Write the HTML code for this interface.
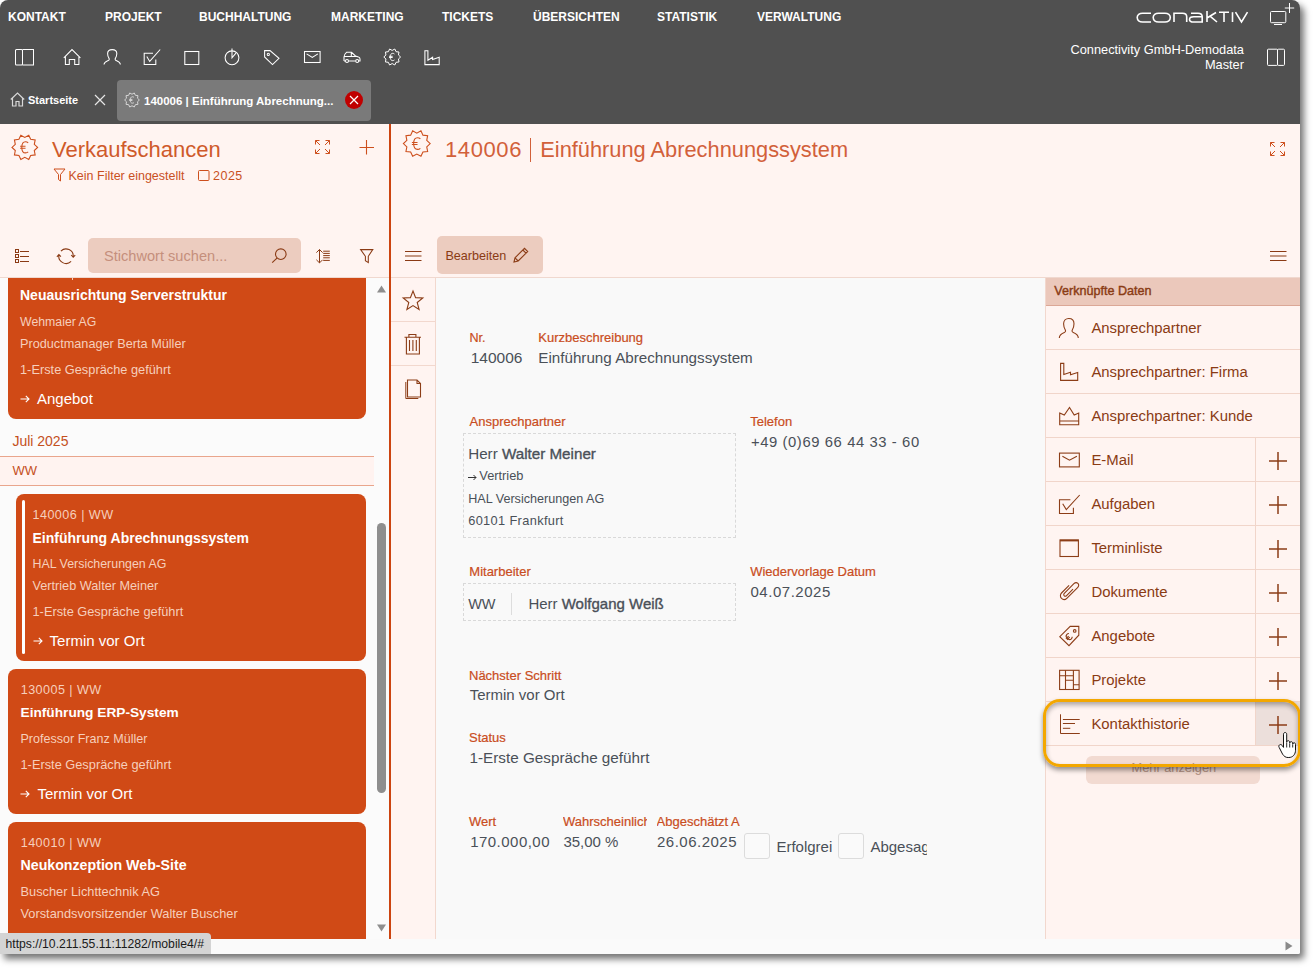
<!DOCTYPE html>
<html><head><meta charset="utf-8">
<style>
*{margin:0;padding:0;box-sizing:border-box}
html,body{width:1315px;height:969px;overflow:hidden;background:#fff;font-family:"Liberation Sans",sans-serif}
.win{position:absolute;left:0;top:0;width:1300px;height:954px;border-radius:8px 8px 2px 0;overflow:hidden;background:#f9f9f9;box-shadow:4px 5px 7px rgba(0,0,0,.55)}
.a{position:absolute}
.t{position:absolute;white-space:nowrap;line-height:1}
svg{position:absolute;overflow:visible}
.top{left:0;top:0;width:1300px;height:124px;background:#505050}
.nav{color:#fff;font-size:12px;font-weight:700;top:11px}
.wi{fill:none;stroke:#fff;stroke-width:1.3}
.lp{left:0;top:124px;width:389px;height:153px;background:#fff4f1}
.oi{fill:none;stroke:#cd4f1d;stroke-width:1.3}
.bi{fill:none;stroke:#8c3d17;stroke-width:1.3}
.card{position:absolute;background:#d04a16;border-radius:8px}
.cw{color:#fff;font-weight:700;font-size:14px}
.cl{color:#f7d0bd;font-size:12.6px}
.lbl{color:#c94d22;font-size:13px;-webkit-text-stroke:.25px #c94d22}
.val{color:#4b5057;font-size:15px}
.rrow{position:absolute;left:1046px;width:254px;height:44px;border-bottom:1px solid #f1d5ca}
.rtxt{color:#8a3b14;font-size:14.9px}
</style></head><body>
<div class="win">
  <!-- top bar -->
  <div class="a top"></div>
  <div class="t nav" style="left:8px">KONTAKT</div>
  <div class="t nav" style="left:105px">PROJEKT</div>
  <div class="t nav" style="left:199px">BUCHHALTUNG</div>
  <div class="t nav" style="left:331px">MARKETING</div>
  <div class="t nav" style="left:442px">TICKETS</div>
  <div class="t nav" style="left:533px">ÜBERSICHTEN</div>
  <div class="t nav" style="left:657px">STATISTIK</div>
  <div class="t nav" style="left:757px">VERWALTUNG</div>


  <!-- top icons -->
  <svg class="a" style="left:10px;top:44px" width="40" height="26" viewBox="10 44 40 26" fill="none" stroke="#fff" stroke-width="1.05"><rect x="15.5" y="49.5" width="7" height="15.5" rx="1"/><path d="M22.5 49.5H33.5V65H22.5"/></svg>
  <svg class="a" style="left:60px;top:44px" width="40" height="26" viewBox="60 44 40 26" fill="none" stroke="#fff" stroke-width="1.05"><path d="M63.8 57.8L72 49.6 80.4 57.8M65.4 56.2V64.5H69.3V59.5H74.7V64.5H78.9V56.2"/></svg>
  <svg class="a" style="left:100px;top:44px" width="40" height="26" viewBox="100 44 40 26" fill="none" stroke="#fff" stroke-width="1.05"><path d="M104 64.6C104 62 106.3 61.3 108.3 60.4 109.3 60 109.5 59.2 109 58.4 108 57 107.6 55.5 107.6 53.6 107.6 50.9 109.5 49.6 112.2 49.6S116.8 50.9 116.8 53.6C116.8 55.5 116.4 57 115.4 58.4 114.9 59.2 115.1 60 116.1 60.4 118.1 61.3 120.4 62 120.4 64.6"/></svg>
  <svg class="a" style="left:140px;top:44px" width="40" height="26" viewBox="140 44 40 26" fill="none" stroke="#fff" stroke-width="1.05"><path d="M153 53.3H144.2V64.5H155.8V59.5"/><path d="M146.8 56.6L149.7 61.4 160.2 49.5"/></svg>
  <svg class="a" style="left:180px;top:44px" width="40" height="26" viewBox="180 44 40 26" fill="none" stroke="#fff" stroke-width="1.05"><rect x="184.8" y="51.5" width="14" height="13"/></svg>
  <svg class="a" style="left:220px;top:44px" width="40" height="26" viewBox="220 44 40 26" fill="none" stroke="#fff" stroke-width="1.05"><circle cx="232" cy="57.8" r="6.9"/><path d="M232 48.6V57.8L235.9 53.2"/></svg>
  <svg class="a" style="left:260px;top:44px" width="40" height="26" viewBox="260 44 40 26" fill="none" stroke="#fff" stroke-width="1.05"><path d="M264.6 50.6H270L279 58.3 272.5 64.6 264.6 57Z"/><circle cx="268.3" cy="54.4" r="1.1"/></svg>
  <svg class="a" style="left:300px;top:44px" width="40" height="26" viewBox="300 44 40 26" fill="none" stroke="#fff" stroke-width="1.05"><rect x="304.5" y="51.5" width="15.6" height="11"/><path d="M306.6 53.9L312.3 57.4 317.9 53.9"/></svg>
  <svg class="a" style="left:340px;top:44px" width="40" height="26" viewBox="340 44 40 26" fill="none" stroke="#fff" stroke-width="1.05"><path d="M344 61V57C344 55.4 345 53.5 346.5 52.3H351.5L355.5 56 358.5 57C359.5 57.3 360 58 360 59V61H358.6M355.6 61H348.4M345.4 61H344M344.2 56.4H357M351.3 52.3V56.4"/><circle cx="347" cy="61" r="1.5"/><circle cx="357.2" cy="61" r="1.5"/></svg>
  <svg class="a" style="left:380px;top:45px" width="22" height="22" viewBox="380 45 22 22" fill="none" stroke="#fff" stroke-width="1"><path d="M400.60 57.00 L398.43 54.98 L399.00 52.06 L396.05 51.70 L394.80 49.01 L392.20 50.45 L389.60 49.01 L388.35 51.70 L385.40 52.06 L385.97 54.98 L383.80 57.00 L385.97 59.02 L385.40 61.94 L388.35 62.30 L389.60 64.99 L392.20 63.55 L394.80 64.99 L396.05 62.30 L399.00 61.94 L398.43 59.02Z"/><path d="M394.43 53.98C393.91 53.52 393.38 53.33 392.66 53.33C391.08 53.33 390.23 54.83 390.23 57.00C390.23 59.17 391.08 60.61 392.66 60.61C393.38 60.61 393.91 60.41 394.43 59.95M389.12 56.28H392.66M389.12 57.52H392.66"/></svg>
  <svg class="a" style="left:420px;top:44px" width="40" height="26" viewBox="420 44 40 26" fill="none" stroke="#fff" stroke-width="1.05"><path d="M424.9 50.8H427.9V60.3L432.6 57.3V59.6L439.2 57.3V64.6H424.9Z"/></svg>

  <!-- tabs -->
  <svg class="a" style="left:10px;top:92px" width="15" height="15" viewBox="0 0 15 15" fill="none" stroke="#d8d8d8" stroke-width="1.2"><path d="M0.8 7.5L7.5 1l6.7 6.5M2.5 6v8h3.5V9.5h3V14h3.5V6"/></svg>
  <div class="t" style="left:28px;top:95px;font-size:11px;font-weight:700;color:#fff">Startseite</div>
  <svg class="a" style="left:94px;top:94px" width="12" height="12" viewBox="0 0 12 12" stroke="#e6e6e6" stroke-width="1.2"><path d="M1 1l10 10M11 1L1 11"/></svg>
  <div class="a" style="left:117px;top:80px;width:254px;height:41px;background:#7a7a7a;border-radius:4px"></div>
  <svg class="a" style="left:121px;top:89px" width="20" height="20" viewBox="121 89 20 20" fill="none" stroke="#d5d5d5" stroke-width="1"><path d="M139.40 100.00 L137.49 98.22 L137.99 95.65 L135.39 95.33 L134.29 92.96 L132.00 94.23 L129.71 92.96 L128.61 95.33 L126.01 95.65 L126.51 98.22 L124.60 100.00 L126.51 101.78 L126.01 104.35 L128.61 104.67 L129.71 107.04 L132.00 105.77 L134.29 107.04 L135.39 104.67 L137.99 104.35 L137.49 101.78Z"/><path d="M133.97 97.34C133.50 96.94 133.04 96.76 132.40 96.76C131.02 96.76 130.27 98.09 130.27 100.00C130.27 101.91 131.02 103.18 132.40 103.18C133.04 103.18 133.50 103.01 133.97 102.60M129.28 99.36H132.40M129.28 100.46H132.40"/></svg>
  <div class="t" style="left:144px;top:95.5px;font-size:11.5px;font-weight:700;color:#fff">140006 | Einführung Abrechnung...</div>
  <svg class="a" style="left:345px;top:91px" width="18" height="18" viewBox="0 0 18 18"><circle cx="9" cy="9" r="9" fill="#c00000"/><path d="M5 5l8 8M13 5l-8 8" stroke="#fff" stroke-width="1.2"/></svg>

  <!-- top right -->
  <svg class="a" style="left:1136px;top:11px" width="113" height="13" viewBox="0 0 113 13" fill="none" stroke="#fff" stroke-width="1.6"><path d="M15 2.2H6.5C3.5 2.2 1.2 4 1.2 6.6s2.3 4.4 5.3 4.4H15"/><path d="M22.5 2.2h6.5c3 0 5.3 1.8 5.3 4.4S32 11 29 11h-6.5c-3 0-5.3-1.8-5.3-4.4s2.3-4.4 5.3-4.4z"/><path d="M38 11V2.2h8.5c2.5 0 4.2 1.5 4.2 3.6V11"/><path d="M55 2.2h7c2.5 0 4.2 1.5 4.2 3.6V11h-8.5c-2.4 0-4.2-.9-4.2-2.6s1.8-2.6 4.2-2.6h8.5"/><path d="M71 0v11M71 7l9-5.5M74 5.2L81 11"/><path d="M83 1.2h10M88 1.2V11"/><path d="M96.5 1.2V11"/><path d="M99.5 1.2L105.5 11l6-9.8"/></svg>
  <svg class="a" style="left:1260px;top:0px" width="40" height="30" viewBox="1260 0 40 30" fill="none" stroke="#fff" stroke-width="1"><rect x="1270.5" y="11.5" width="15.3" height="11.2" rx="1"/><path d="M1274 24.5H1282M1289.5 3V13M1284.8 8H1294.2"/></svg>
  <div class="t" style="right:56px;top:43.3px;font-size:12.8px;color:#fff;text-align:right;line-height:14.4px">Connectivity GmbH-Demodata<br>Master</div>
  <svg class="a" style="left:1260px;top:40px" width="40" height="30" viewBox="1260 40 40 30" fill="none" stroke="#fff" stroke-width="1"><rect x="1267.5" y="49.2" width="10" height="16.2" rx="0.8"/><rect x="1277.5" y="49.2" width="7" height="16.2" rx="1"/></svg>

  <!-- left panel -->
  <div class="a lp"></div>

  <!-- left header content -->
  <svg class="a" style="left:9px;top:131px" width="31" height="31" viewBox="9 131 31 31" fill="none" stroke="#cd4f1d" stroke-width="1.1"><path d="M37.60 147.40 L34.30 144.31 L35.16 139.88 L30.67 139.32 L28.76 135.23 L24.80 137.42 L20.84 135.23 L18.93 139.32 L14.44 139.88 L15.30 144.31 L12.00 147.40 L15.30 150.49 L14.44 154.92 L18.93 155.48 L20.84 159.57 L24.80 157.38 L28.76 159.57 L30.67 155.48 L35.16 154.92 L34.30 150.49Z"/><path d="M28.20 142.80C27.40 142.10 26.60 141.80 25.50 141.80C23.10 141.80 21.80 144.10 21.80 147.40C21.80 150.70 23.10 152.90 25.50 152.90C26.60 152.90 27.40 152.60 28.20 151.90M20.10 146.30H25.50M20.10 148.20H25.50"/></svg>
  <div class="t" style="left:52px;top:139.3px;font-size:22px;color:#cf5a2a">Verkaufschancen</div>
  <svg class="a" style="left:315px;top:140px" width="16" height="15" viewBox="0 0 16 15" fill="none" stroke="#cd4f1d" stroke-width="1"><path d="M0.5 4.5V0.5H4.5M0.5 0.5L5 5M10.5 0.5H14.5V4.5M14.5 0.5L10 5M0.5 9.5V13.5H4.5M0.5 13.5L5 9M14.5 9.5V13.5H10.5M14.5 13.5L10 9"/></svg>
  <svg class="a" style="left:359px;top:140px" width="15" height="15" viewBox="0 0 15 15" fill="none" stroke="#cd4f1d" stroke-width="1.1"><path d="M7.5 0v14.5M0.5 7.5h14.5"/></svg>
  <svg class="a" style="left:53px;top:168px" width="13" height="14" viewBox="0 0 13 14" fill="none" stroke="#cd4f1d" stroke-width="1"><path d="M1 1h11L7.5 6.5V13L5.5 11.5V6.5z"/></svg>
  <div class="t" style="left:68.5px;top:170px;font-size:12.5px;color:#c9501f">Kein Filter eingestellt</div>
  <svg class="a" style="left:198px;top:170px" width="12" height="11" viewBox="0 0 12 11" fill="none" stroke="#cd4f1d" stroke-width="1"><rect x="0.5" y="0.5" width="10.5" height="10" rx="1"/></svg>
  <div class="t" style="left:213px;top:170px;font-size:12.5px;color:#c9501f;letter-spacing:0.5px">2025</div>

  <!-- left toolbar -->
  <svg class="a" style="left:10px;top:244px" width="24" height="24" viewBox="10 244 24 24" fill="none" stroke="#8a3a14" stroke-width="1"><rect x="15.5" y="249.5" width="3" height="3"/><rect x="15.5" y="254.5" width="3" height="3"/><rect x="15.5" y="259.5" width="3" height="3"/><path d="M20 251.5H29M20 256.5H29M20 261.5H29"/></svg>
  <svg class="a" style="left:54px;top:244px" width="24" height="24" viewBox="54 244 24 24" fill="none" stroke="#8a3a14" stroke-width="1.1"><path d="M60.9 251.1A7.2 7.2 0 0 1 73.2 256.8M71.1 261.3A7.2 7.2 0 0 1 58.9 255M71.2 255L73.2 257.3 75.2 255.2M56.9 256.8L58.9 254.5 60.9 256.6"/></svg>
  <div class="a" style="left:88px;top:238px;width:213px;height:35px;background:#ecccbf;border-radius:5px"></div>
  <div class="t" style="left:104px;top:249px;font-size:14.6px;color:#c58f7c">Stichwort suchen...</div>
  <svg class="a" style="left:268px;top:244px" width="24" height="24" viewBox="268 244 24 24" fill="none" stroke="#8a3a14" stroke-width="1.1"><circle cx="280.8" cy="254.2" r="5.3"/><path d="M277 258.1L272.2 262.7"/></svg>
  <svg class="a" style="left:312px;top:244px" width="24" height="24" viewBox="312 244 24 24" fill="none" stroke="#8a3a14" stroke-width="1"><path d="M319.5 249.6V262.8M316.4 252.6L319.5 249.5 322.6 252.6M316.4 259.8L319.5 262.9 322.6 259.8M323.2 251.2H329.8M323.2 253.4H329.8M323.2 255.6H329.8M323.2 257.8H329.8M323.2 260.4H329.8"/></svg>
  <svg class="a" style="left:356px;top:244px" width="24" height="24" viewBox="356 244 24 24" fill="none" stroke="#8a3a14" stroke-width="1.05"><path d="M360.6 249.6H372.8L368.3 256.3V262.6L365.4 260.8V256.3Z"/></svg>

  <!-- middle header -->
  <div class="a" style="left:391px;top:124px;width:909px;height:153px;background:#fff4f1"></div>
  <div class="a" style="left:0;top:277px;width:1300px;height:1px;background:#f0d8cf"></div>
  <div class="a" style="left:389px;top:124px;width:2px;height:815px;background:#cc4410"></div>

  <!-- list area -->
  <div class="a" style="left:0;top:278px;width:389px;height:661px;background:#fbfbfb"></div>


  <!-- list -->
  <div class="card" style="left:8px;top:278px;width:358px;height:141px;border-radius:0 0 8px 8px"></div>
  <div class="t" style="left:20px;top:287.8px;font-size:14px;color:#fff;font-weight:700">Neuausrichtung Serverstruktur</div>
  <div class="t" style="left:20px;top:315.6px;font-size:12.3px;color:#f6cfbc">Wehmaier AG</div>
  <div class="t" style="left:20px;top:338.2px;font-size:12.7px;color:#f6cfbc">Productmanager Berta Müller</div>
  <div class="t" style="left:20px;top:364.2px;font-size:12.8px;color:#f6cfbc">1-Erste Gespräche geführt</div>
  <svg class="a" style="left:20px;top:395px" width="10" height="8" viewBox="0 0 10 8" fill="none" stroke="#fff" stroke-width="1.1"><path d="M0.5 4h8.5M5.8 0.8L9 4 5.8 7.2"/></svg>
  <div class="t" style="left:37px;top:391.2px;font-size:15px;color:#fff">Angebot</div>
  <div class="t" style="left:12.4px;top:433.9px;font-size:14px;color:#c4501d">Juli 2025</div>
  <div class="a" style="left:0;top:456px;width:374px;height:30px;background:#fff3f0;border-top:1px solid #e9a58c;border-bottom:1px solid #e9a58c"></div>
  <div class="t" style="left:12.4px;top:463.9px;font-size:13px;color:#c4501d">WW</div>
  <div class="card" style="left:16px;top:494px;width:350px;height:167px"></div>
  <div class="a" style="left:22px;top:500px;width:3px;height:154px;background:#fff;border-radius:1.5px"></div>
  <div class="t" style="left:32.5px;top:508.6px;font-size:12.6px;color:#f6cfbc;letter-spacing:0.45px">140006 | WW</div>
  <div class="t" style="left:32.5px;top:530.5px;font-size:14px;color:#fff;font-weight:700">Einführung Abrechnungssystem</div>
  <div class="t" style="left:32.5px;top:557.8px;font-size:12.4px;color:#f6cfbc">HAL Versicherungen AG</div>
  <div class="t" style="left:32.5px;top:580.4px;font-size:12.7px;color:#f6cfbc">Vertrieb Walter Meiner</div>
  <div class="t" style="left:32.5px;top:606.2px;font-size:12.8px;color:#f6cfbc">1-Erste Gespräche geführt</div>
  <svg class="a" style="left:32.5px;top:637px" width="10" height="8" viewBox="0 0 10 8" fill="none" stroke="#fff" stroke-width="1.1"><path d="M0.5 4h8.5M5.8 0.8L9 4 5.8 7.2"/></svg>
  <div class="t" style="left:49.6px;top:633.1px;font-size:15px;color:#fff">Termin vor Ort</div>
  <div class="card" style="left:8px;top:669px;width:358px;height:145px"></div>
  <div class="t" style="left:20.7px;top:683.6px;font-size:12.6px;color:#f6cfbc;letter-spacing:0.45px">130005 | WW</div>
  <div class="t" style="left:20.5px;top:706.0px;font-size:13.7px;color:#fff;font-weight:700">Einführung ERP-System</div>
  <div class="t" style="left:20.5px;top:733.2px;font-size:12.56px;color:#f6cfbc">Professor Franz Müller</div>
  <div class="t" style="left:20.5px;top:759.4px;font-size:12.8px;color:#f6cfbc">1-Erste Gespräche geführt</div>
  <svg class="a" style="left:20px;top:790px" width="10" height="8" viewBox="0 0 10 8" fill="none" stroke="#fff" stroke-width="1.1"><path d="M0.5 4h8.5M5.8 0.8L9 4 5.8 7.2"/></svg>
  <div class="t" style="left:37.4px;top:786.1px;font-size:15px;color:#fff">Termin vor Ort</div>
  <div class="card" style="left:8px;top:822px;width:358px;height:140px"></div>
  <div class="t" style="left:20.7px;top:836.6px;font-size:12.6px;color:#f6cfbc;letter-spacing:0.45px">140010 | WW</div>
  <div class="t" style="left:20.5px;top:858.0px;font-size:14.2px;color:#fff;font-weight:700">Neukonzeption Web-Site</div>
  <div class="t" style="left:20.5px;top:886.2px;font-size:12.8px;color:#f6cfbc">Buscher Lichttechnik AG</div>
  <div class="t" style="left:20.5px;top:908.0px;font-size:12.8px;color:#f6cfbc">Vorstandsvorsitzender Walter Buscher</div>
  <div class="a" style="left:377px;top:523px;width:9px;height:270px;background:#8e8e8e;border-radius:4.5px"></div>
  <svg class="a" style="left:377px;top:285px" width="9" height="8" viewBox="0 0 9 8"><path d="M0 7.5L4.5 0.5 9 7.5z" fill="#8e8e8e"/></svg>
  <svg class="a" style="left:377px;top:924px" width="9" height="8" viewBox="0 0 9 8"><path d="M0 0.5L4.5 7.5 9 0.5z" fill="#8e8e8e"/></svg>


  <!-- middle header content -->
  <svg class="a" style="left:400px;top:127px" width="32" height="32" viewBox="400 127 32 32" fill="none" stroke="#cd4f1d" stroke-width="1.1"><path d="M430.20 143.60 L426.74 140.37 L427.64 135.72 L422.94 135.14 L420.94 130.86 L416.80 133.15 L412.66 130.86 L410.66 135.14 L405.96 135.72 L406.86 140.37 L403.40 143.60 L406.86 146.83 L405.96 151.48 L410.66 152.06 L412.66 156.34 L416.80 154.05 L420.94 156.34 L422.94 152.06 L427.64 151.48 L426.74 146.83Z"/><path d="M420.36 138.78C419.52 138.05 418.68 137.74 417.53 137.74C415.02 137.74 413.66 140.15 413.66 143.60C413.66 147.05 415.02 149.36 417.53 149.36C418.68 149.36 419.52 149.04 420.36 148.31M411.88 142.45H417.53M411.88 144.44H417.53"/></svg>
  <div class="t" style="left:445px;top:139.2px;font-size:22px;color:#d2603a;letter-spacing:0.6px">140006</div>
  <div class="a" style="left:530px;top:138px;width:1.2px;height:23.5px;background:#d2603a"></div>
  <div class="t" style="left:540.3px;top:139.3px;font-size:21.8px;color:#d2603a">Einführung Abrechnungssystem</div>
  <svg class="a" style="left:1270px;top:141.5px" width="16" height="15" viewBox="0 0 16 15" fill="none" stroke="#cd4f1d" stroke-width="1"><path d="M0.5 4.5V0.5H4.5M0.5 0.5L5 5M10.5 0.5H14.5V4.5M14.5 0.5L10 5M0.5 9.5V13.5H4.5M0.5 13.5L5 9M14.5 9.5V13.5H10.5M14.5 13.5L10 9"/></svg>
  <svg class="a" style="left:405px;top:250px" width="17" height="12" viewBox="0 0 17 12" fill="none" stroke="#8a3a14" stroke-width="1.1"><path d="M0 1.5h16.5M0 6h16.5M0 10.5h16.5"/></svg>
  <svg class="a" style="left:1270px;top:250px" width="17" height="12" viewBox="0 0 17 12" fill="none" stroke="#8a3a14" stroke-width="1.1"><path d="M0 1.5h16.5M0 6h16.5M0 10.5h16.5"/></svg>
  <div class="a" style="left:437px;top:236px;width:106px;height:38px;background:#ecccbf;border-radius:5px"></div>
  <div class="t" style="left:445.4px;top:249.7px;font-size:12.6px;color:#8a3b14">Bearbeiten</div>
  <svg class="a" style="left:513px;top:247px" width="16" height="16" viewBox="0 0 16 16" fill="none" stroke="#8c3d17" stroke-width="1.1"><path d="M1 15l1-4.2L11.5 1.3l3.2 3.2L5.2 14z M2 10.8l3.2 3.2M9.8 3l3.2 3.2"/></svg>

  <div class="a cardmark" style="left:72px;top:278px;width:1px;height:2px;background:#f6cfbc"></div>
  <!-- middle icon column -->
  <div class="a" style="left:391px;top:278px;width:45px;height:661px;background:#fff4f1;border-right:1px solid #f2d8ce"></div>

  <!-- icon column content -->
  <div class="a" style="left:391px;top:321px;width:44px;height:1px;background:#f2d8ce"></div>
  <div class="a" style="left:391px;top:365px;width:44px;height:1px;background:#f2d8ce"></div>
  <svg class="a" style="left:402px;top:290px" width="22" height="21" viewBox="0 0 22 21" fill="none" stroke="#8c3d17" stroke-width="1.1"><path d="M11 1l2.6 6.6 7.2.4-5.6 4.5 1.9 7L11 15.6l-6.1 3.9 1.9-7L1.2 8l7.2-.4z"/></svg>
  <svg class="a" style="left:404px;top:333px" width="18" height="22" viewBox="0 0 18 22" fill="none" stroke="#8c3d17" stroke-width="1.1"><path d="M0.5 4.2h16.5M4.9 4.2V1.5h7V4.2M2.4 4.2v16.8h13V4.2M5.5 7v11M8.9 7v11M12.3 7v11"/></svg>
  <svg class="a" style="left:404px;top:377px" width="18" height="22" viewBox="0 0 18 22" fill="none" stroke="#8c3d17" stroke-width="1.1"><path d="M3.5 3v17h13V6.5L13 3z M13 3v3.5h3.5"/><path d="M1.8 5v16.5h12.5" stroke-width="1"/></svg>

  <!-- content fields -->
  <div class="t" style="left:469.5px;top:332.2px;font-size:12px;color:#c94d22;-webkit-text-stroke:0.2px #c94d22;font-size:12.6px">Nr.</div>
  <div class="t" style="left:538.3px;top:331.4px;font-size:13px;color:#c94d22;-webkit-text-stroke:0.2px #c94d22">Kurzbeschreibung</div>
  <div class="t" style="left:470.7px;top:350.2px;font-size:15.5px;color:#4a5058">140006</div>
  <div class="t" style="left:538.3px;top:350.4px;font-size:15.2px;color:#4a5058">Einführung Abrechnungssystem</div>
  <div class="t" style="left:469.5px;top:415.4px;font-size:13px;color:#c94d22;-webkit-text-stroke:0.2px #c94d22">Ansprechpartner</div>
  <div class="a" style="left:463px;top:433px;width:273px;height:105px;border:1px dashed #d9d9d9"></div>
  <div class="t" style="left:468.2px;top:446.2px;font-size:15.2px;color:#4a5058">Herr <span style="-webkit-text-stroke:0.35px #4a5058">Walter Meiner</span></div>
  <svg class="a" style="left:468px;top:474px" width="9" height="7" viewBox="0 0 9 7" fill="none" stroke="#333" stroke-width="1"><path d="M0 3.5h8M5.5 1L8 3.5 5.5 6"/></svg>
  <div class="t" style="left:479.3px;top:469.5px;font-size:12.8px;color:#4a5058">Vertrieb</div>
  <div class="t" style="left:468.2px;top:492.5px;font-size:12.6px;color:#4a5058">HAL Versicherungen AG</div>
  <div class="t" style="left:468.2px;top:514.5px;font-size:12.8px;color:#4a5058;letter-spacing:0.35px">60101 Frankfurt</div>
  <div class="t" style="left:750.2px;top:415.1px;font-size:13px;color:#c94d22;-webkit-text-stroke:0.2px #c94d22">Telefon</div>
  <div class="t" style="left:750.9px;top:434.5px;font-size:14.8px;color:#4a5058;letter-spacing:0.6px">+49 (0)69 66 44 33 - 60</div>
  <div class="t" style="left:469.3px;top:565.0px;font-size:13px;color:#c94d22;-webkit-text-stroke:0.2px #c94d22">Mitarbeiter</div>
  <div class="a" style="left:463px;top:583px;width:273px;height:38px;border:1px dashed #d9d9d9"></div>
  <div class="a" style="left:511px;top:593px;width:1px;height:22px;background:#dddddd"></div>
  <div class="t" style="left:468.2px;top:596.8px;font-size:14.5px;color:#4a5058">WW</div>
  <div class="t" style="left:528.4px;top:596.4px;font-size:15px;color:#4a5058">Herr <span style="-webkit-text-stroke:0.35px #4a5058">Wolfgang Weiß</span></div>
  <div class="t" style="left:750.2px;top:565.4px;font-size:13px;color:#c94d22;-webkit-text-stroke:0.2px #c94d22">Wiedervorlage Datum</div>
  <div class="t" style="left:750.5px;top:584.3px;font-size:15px;color:#4a5058;letter-spacing:0.52px">04.07.2025</div>
  <div class="t" style="left:469px;top:668.5px;font-size:13px;color:#c94d22;-webkit-text-stroke:0.2px #c94d22">Nächster Schritt</div>
  <div class="t" style="left:469.7px;top:687.4px;font-size:15px;color:#4a5058">Termin vor Ort</div>
  <div class="t" style="left:469px;top:731.4px;font-size:13px;color:#c94d22;-webkit-text-stroke:0.2px #c94d22">Status</div>
  <div class="t" style="left:469.5px;top:750.3px;font-size:15.28px;color:#4a5058">1-Erste Gespräche geführt</div>
  <div class="t" style="left:469px;top:815.2px;font-size:13px;color:#c94d22;-webkit-text-stroke:0.2px #c94d22">Wert</div>
  <div class="t" style="left:470.2px;top:834.1px;font-size:15px;color:#4a5058;letter-spacing:0.47px">170.000,00</div>
  <div class="a" style="left:563px;top:812px;width:84px;height:20px;overflow:hidden"><div class="t" style="left:0px;top:3.2px;font-size:13px;color:#c94d22;-webkit-text-stroke:0.2px #c94d22">Wahrscheinlichkeit</div></div>
  <div class="t" style="left:563.4px;top:834.1px;font-size:15px;color:#4a5058">35,00 %</div>
  <div class="a" style="left:656.6px;top:812px;width:83px;height:20px;overflow:hidden"><div class="t" style="left:0px;top:3.2px;font-size:13px;color:#c94d22;-webkit-text-stroke:0.2px #c94d22">Abgeschätzt Abschluss</div></div>
  <div class="t" style="left:657px;top:834.1px;font-size:15px;color:#4a5058;letter-spacing:0.49px">26.06.2025</div>
  <div class="a" style="left:744px;top:833px;width:26px;height:26px;border:1px solid #dcdcdc;border-radius:3px;background:#fafafa"></div>
  <div class="a" style="left:776.4px;top:838px;width:56px;height:20px;overflow:hidden"><div class="t" style="left:0px;top:0.6px;font-size:15px;color:#4a5058">Erfolgreich</div></div>
  <div class="a" style="left:838px;top:833px;width:26px;height:26px;border:1px solid #dcdcdc;border-radius:3px;background:#fafafa"></div>
  <div class="a" style="left:870.4px;top:838px;width:57px;height:20px;overflow:hidden"><div class="t" style="left:0px;top:0.6px;font-size:15px;color:#4a5058">Abgesagt</div></div>

  <!-- right panel -->
  <div class="a" style="left:1045px;top:278px;width:255px;height:661px;background:#fff4f1;border-left:1px solid #f2d8ce"></div>

  <!-- status bar -->
  <div class="a" style="left:0;top:939px;width:1300px;height:15px;background:#fafafa"></div>

  <!-- right panel content -->
  <div class="a" style="left:1046px;top:278px;width:254px;height:28px;background:#ebc8bb;border-bottom:1px solid #dba796"></div>
  <div class="t" style="left:1054.3px;top:284.8px;font-size:12.6px;color:#8a3b14;-webkit-text-stroke:0.4px #8a3b14">Verknüpfte Daten</div>
  <div class="rrow" style="top:306px"></div>
  <svg class="a" style="left:1057px;top:316px" width="24" height="24" viewBox="0 0 24 24" fill="none" stroke="#8c3d17" stroke-width="1.1"><path d="M2.3 22c0-3.5 2.5-4.5 5-5.5 1.3-.5 1.5-1.5 1-2.5C7.1 12 6.6 10 6.6 7.8 6.6 4.5 8.8 2.5 11.8 2.5s5.2 2 5.2 5.3c0 2.2-.5 4.2-1.7 6.2-.5 1-.3 2 1 2.5 2.5 1 5 2 5 5.5"/></svg>
  <div class="t" style="left:1091.4px;top:321.2px;font-size:14.9px;color:#8a3b14">Ansprechpartner</div>
  <div class="rrow" style="top:350px"></div>
  <svg class="a" style="left:1057px;top:360px" width="24" height="24" viewBox="0 0 24 24" fill="none" stroke="#8c3d17" stroke-width="1.1"><path d="M3.6 3.4H6.8V14.5L13.5 12.3V14.8L20.7 12.5V20.4H3.6Z"/></svg>
  <div class="t" style="left:1091.4px;top:365.2px;font-size:14.9px;color:#8a3b14">Ansprechpartner: Firma</div>
  <div class="rrow" style="top:394px"></div>
  <svg class="a" style="left:1057px;top:404px" width="24" height="24" viewBox="0 0 24 24" fill="none" stroke="#8c3d17" stroke-width="1.1"><path d="M2.7 9L7.3 11L12.5 3.5L17.2 11L21.7 9V20.8H2.7Z M2.7 17H21.7"/></svg>
  <div class="t" style="left:1091.4px;top:409.2px;font-size:14.9px;color:#8a3b14">Ansprechpartner: Kunde</div>
  <div class="rrow" style="top:438px"></div>
  <svg class="a" style="left:1057px;top:448px" width="24" height="24" viewBox="0 0 24 24" fill="none" stroke="#8c3d17" stroke-width="1.1"><rect x="2.5" y="5.1" width="19.8" height="13.8"/><path d="M5.4 8.3L12.5 12.2 19.9 8.3"/></svg>
  <div class="t" style="left:1091.4px;top:453.2px;font-size:14.9px;color:#8a3b14">E-Mail</div>
  <div class="a" style="left:1255px;top:438px;width:45px;height:43px;border-left:1px solid #f1d5ca"></div>
  <svg class="a" style="left:1269px;top:452px" width="18" height="18" viewBox="0 0 18 18" fill="none" stroke="#8c3d17" stroke-width="1.5"><path d="M9 0v18M0 9h18"/></svg>
  <div class="rrow" style="top:482px"></div>
  <svg class="a" style="left:1057px;top:492px" width="24" height="24" viewBox="0 0 24 24" fill="none" stroke="#8c3d17" stroke-width="1.1"><path d="M16.4 15.8V21.5H2.5V7.8H13.4"/><path d="M5.7 11.7L9.3 17.6 22.7 3"/></svg>
  <div class="t" style="left:1091.4px;top:497.2px;font-size:14.9px;color:#8a3b14">Aufgaben</div>
  <div class="a" style="left:1255px;top:482px;width:45px;height:43px;border-left:1px solid #f1d5ca"></div>
  <svg class="a" style="left:1269px;top:496px" width="18" height="18" viewBox="0 0 18 18" fill="none" stroke="#8c3d17" stroke-width="1.5"><path d="M9 0v18M0 9h18"/></svg>
  <div class="rrow" style="top:526px"></div>
  <svg class="a" style="left:1057px;top:536px" width="24" height="24" viewBox="0 0 24 24" fill="none" stroke="#8c3d17" stroke-width="1.1"><rect x="3" y="3.9" width="18.4" height="16.6"/><path d="M3 4.6H21.4" stroke-width="1.6"/></svg>
  <div class="t" style="left:1091.4px;top:541.2px;font-size:14.9px;color:#8a3b14">Terminliste</div>
  <div class="a" style="left:1255px;top:526px;width:45px;height:43px;border-left:1px solid #f1d5ca"></div>
  <svg class="a" style="left:1269px;top:540px" width="18" height="18" viewBox="0 0 18 18" fill="none" stroke="#8c3d17" stroke-width="1.5"><path d="M9 0v18M0 9h18"/></svg>
  <div class="rrow" style="top:570px"></div>
  <svg class="a" style="left:1057px;top:580px" width="24" height="24" viewBox="0 0 24 24" fill="none" stroke="#8c3d17" stroke-width="1.1"><path d="M12.1 5.4L4.5 13C3 14.5 3.1 17 4.5 18.4 6 19.8 8.3 19.8 9.8 18.3L20.8 7.3C22 6.1 22 4.4 20.9 3.4 19.8 2.4 18.1 2.5 16.9 3.7L7.3 13.3C6.5 14.1 6.6 15.2 7.3 15.8 7.9 16.4 8.9 16.3 9.6 15.6L16 9.2"/></svg>
  <div class="t" style="left:1091.4px;top:585.2px;font-size:14.9px;color:#8a3b14">Dokumente</div>
  <div class="a" style="left:1255px;top:570px;width:45px;height:43px;border-left:1px solid #f1d5ca"></div>
  <svg class="a" style="left:1269px;top:584px" width="18" height="18" viewBox="0 0 18 18" fill="none" stroke="#8c3d17" stroke-width="1.5"><path d="M9 0v18M0 9h18"/></svg>
  <div class="rrow" style="top:614px"></div>
  <svg class="a" style="left:1057px;top:624px" width="24" height="24" viewBox="0 0 24 24" fill="none" stroke="#8c3d17" stroke-width="1.1"><path d="M13.2 2.4H21.8V11.2L12 21.6 2.8 12.7Z"/><circle cx="17.7" cy="6.9" r="1.3"/><g transform="rotate(-45 12 12.7)"><path d="M14.2 10.4c-.5-.6-1.2-.9-2-.9-1.6 0-2.6 1.4-2.6 3.2s1 3.2 2.6 3.2c.8 0 1.5-.3 2-.9M8.4 12h3.8M8.4 13.5h3.8"/></g></svg>
  <div class="t" style="left:1091.4px;top:629.2px;font-size:14.9px;color:#8a3b14">Angebote</div>
  <div class="a" style="left:1255px;top:614px;width:45px;height:43px;border-left:1px solid #f1d5ca"></div>
  <svg class="a" style="left:1269px;top:628px" width="18" height="18" viewBox="0 0 18 18" fill="none" stroke="#8c3d17" stroke-width="1.5"><path d="M9 0v18M0 9h18"/></svg>
  <div class="rrow" style="top:658px"></div>
  <svg class="a" style="left:1057px;top:668px" width="24" height="24" viewBox="0 0 24 24" fill="none" stroke="#8c3d17" stroke-width="1.1"><rect x="2.6" y="2.3" width="19.5" height="19.2"/><path d="M8.5 2.3V21.5M16.4 2.3V21.5M2.6 7.7H16.4M8.5 12.2H16.4M16.4 16.8H22.1"/></svg>
  <div class="t" style="left:1091.4px;top:673.2px;font-size:14.9px;color:#8a3b14">Projekte</div>
  <div class="a" style="left:1255px;top:658px;width:45px;height:43px;border-left:1px solid #f1d5ca"></div>
  <svg class="a" style="left:1269px;top:672px" width="18" height="18" viewBox="0 0 18 18" fill="none" stroke="#8c3d17" stroke-width="1.5"><path d="M9 0v18M0 9h18"/></svg>
  <div class="rrow" style="top:702px"></div>
  <svg class="a" style="left:1057px;top:712px" width="24" height="24" viewBox="0 0 24 24" fill="none" stroke="#8c3d17" stroke-width="1.1"><path d="M3.5 2.3V21.5H22.8M5.9 7.5H22.7M5.9 11.5H18M5.9 16.3H13.3" stroke-width="1"/></svg>
  <div class="t" style="left:1091.4px;top:717.2px;font-size:14.9px;color:#8a3b14">Kontakthistorie</div>
  <div class="a" style="left:1255px;top:702px;width:45px;height:43px;border-left:1px solid #f1d5ca;background:#ecdfdb"></div>
  <svg class="a" style="left:1269px;top:716px" width="18" height="18" viewBox="0 0 18 18" fill="none" stroke="#8c3d17" stroke-width="1.5"><path d="M9 0v18M0 9h18"/></svg>
  <div class="a" style="left:1086px;top:756px;width:174px;height:28px;background:#f2dad1;border-radius:6px"></div>
  <div class="t" style="left:1131.5px;top:762.0px;font-size:12.8px;color:#b08e80">Mehr anzeigen</div>
  <div class="a" style="left:1043px;top:699px;width:258px;height:68px;border:3px solid #f3a700;border-radius:17px;box-shadow:0 3px 5px rgba(0,0,0,.42), inset 0 3px 5px rgba(0,0,0,.32)"></div>
  <svg class="a" style="left:1278px;top:732px" width="20" height="26" viewBox="0 0 20 26"><path d="M5.5 2.2c0-1 .7-1.7 1.6-1.7s1.6.7 1.6 1.7v8c0-.9.7-1.5 1.5-1.5s1.5.6 1.5 1.5v1c0-.9.7-1.5 1.5-1.5s1.5.6 1.5 1.5v1c0-.9.7-1.4 1.4-1.4.8 0 1.4.6 1.4 1.5v6c0 4-2.6 7.2-6.7 7.2H10c-2.5 0-4-1.3-5.4-3.3L1.2 15.5c-.6-.9-.5-2 .3-2.6.8-.6 1.9-.4 2.6.5l1.4 2V2.2z" fill="#fff" stroke="#111" stroke-width="1"/><path d="M8.7 10.5v5M11.7 11.5v4M14.7 12.5v3" stroke="#111" stroke-width=".9"/></svg>
  <div class="a" style="left:0;top:933px;width:211px;height:21px;background:#d4d4d4;border-radius:0 4px 0 0"></div>
  <div class="t" style="left:5.5px;top:938.0px;font-size:12.2px;color:#1a1a1a">https://10.211.55.11:11282/mobile4/#</div>
  <svg class="a" style="left:1285px;top:941px" width="8" height="10" viewBox="0 0 8 10"><path d="M0.5 0.5L7.5 5 0.5 9.5z" fill="#8a8a8a"/></svg>
</div>
</body></html>
